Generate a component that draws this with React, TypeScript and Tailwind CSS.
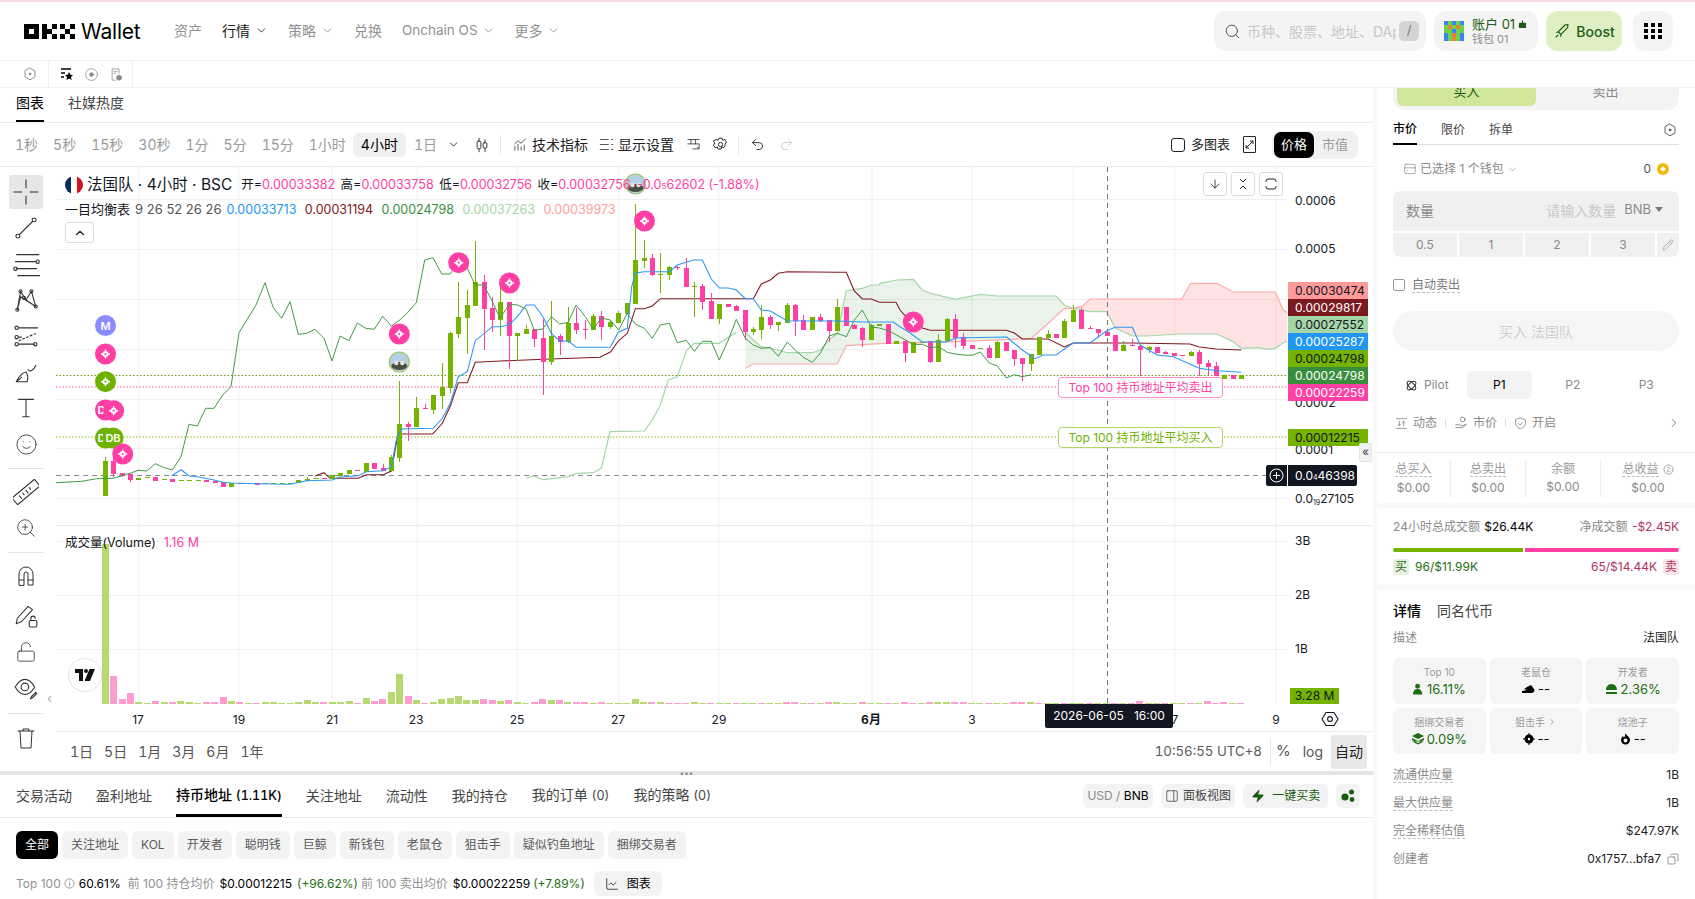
import React from "react";
import { Search, ChevronDown, Smile, ZoomIn, LockOpen, ArrowDown, ChevronRight, Copy, Pencil, Zap, Undo2, Redo2, ChevronUp, LineChart, PanelRight } from "lucide-react";

type P = [number, number];
const z3 = (a: number[]) => toPts(a, 0, 170);
const z4 = (a: number[]) => toPts(a, 400, 170);
const z5 = (a: number[]) => toPts(a, 880, 240);
function toPts(a: number[], ox: number, oy: number): P[] {
  const r: P[] = [];
  for (let i = 0; i < a.length; i += 2) r.push([ox + a[i] / 3, oy + a[i + 1] / 3]);
  return r;
}
const ps = (p: P[]) => p.map(([x, y]) => `${x.toFixed(1)},${y.toFixed(1)}`).join(" ");

const chikou = [
  ...z3([168,938,245,934,290,926,340,925,390,910,415,901,440,903,466,881,490,892,517,900,543,860,567,763,592,768,617,715,642,715,668,675,693,650,717,488,768,405,795,338,820,413,845,445,870,395,895,493,920,490,945,478,972,505,996,573,1020,498,1047,512,1072,459,1097,475,1123,478,1148,439,1174,468,1199,450,1224,427,1249,398,1274,270,1299,263,1325,312,1350,312,1375,278,1400,290,1425,345,1451,345,1477,394]),
  ...z4([300,445,328,403,353,405,379,418,403,481,428,477,454,440,479,462,505,457,528,405,556,440,580,477,604,444,631,450,656,480,682,430,706,462,733,475,757,505,781,465,808,460,832,518,859,511,883,544,907,514,934,514,958,570,985,510,1009,448,1036,505,1060,525,1084,535,1111,532,1135,559,1162,516,1186,540,1210,562,1237,577,1261,550,1288,498,1312,490,1339,500,1363,450,1387,420,1414,471,1438,474,1465,482]),
  ...z5([50,285,76,300,100,313,127,313,151,323,175,320,202,337,226,342,250,345,277,346,301,336,328,369,352,378,379,414,403,404,427,410,454,404]),
];
const blue = [
  ...z3([515,917,543,899,567,917,592,920,642,930,668,937,693,939,770,941,870,943,920,932,996,930,1020,921,1075,917,1099,905,1150,902,1174,890,1191,800,1205,777,1300,775,1327,745,1351,700,1375,620,1402,605,1426,512,1477,470]),
  ...z4([301,470,328,464,352,440,379,405,403,405,430,442,454,490,479,513,505,513,529,532,631,532,655,487,682,475,695,350,706,309,733,305,808,305,832,285,880,270,907,270,934,327,958,354,985,354,1009,360,1036,386,1060,386,1084,420,1111,423,1162,453,1312,453,1387,456]),
  ...z5([40,246,60,260,85,275,127,306,200,306,226,294,380,291,427,330,465,356,490,345,528,345,580,309,630,309,680,272,705,262,757,262,781,316,832,345,880,350,958,385,1010,392,1084,397]),
];
const base = [
  ...z3([945,918,972,908,990,925,1075,925,1099,914,1150,914,1174,903,1191,810,1205,792,1298,792,1327,760,1351,708,1375,638,1402,638,1426,577]),
  ...z4([301,573,430,568,600,562,632,545,655,513,682,490,706,416,733,416,757,408,781,386,1060,386,1084,342,1111,330,1135,310,1162,305,1312,307,1339,307,1363,363,1387,387,1414,387,1438,397]),
  ...z5([48,187,60,210,85,237,127,264,151,271,379,271,403,279,427,297,505,297,553,321,580,309,757,309,930,312,958,321,1010,327,1084,330]),
];
const spanAPre = z4([379,925,400,918,430,929,505,920,530,910,580,908,604,895,630,785,733,783,757,750,781,705,805,630,832,620,860,540,883,520,958,520,1009,487]);
const spanA1 = [...z4([1036,487,1060,510,1084,530,1135,540,1162,548,1237,548,1261,540,1288,510,1312,490,1339,362,1387,355,1414,345,1438,345]), ...z5([0,130,50,120,100,118,127,150,151,160,226,178,300,163,350,168,528,168,553,195,580,205])];
const spanA2 = z5([580,205,630,215,680,215,705,263,757,288,800,288,900,282,1010,282,1060,305,1084,325,1135,323,1162,328,1186,325,1210,308,1222,305]);
const spanB1 = [...z4([1036,595,1060,582,1312,582,1339,527]), ...z5([0,311,226,305,427,297,454,295,505,250,553,205,580,205])];
const spanB2 = z5([580,205,605,200,630,177,905,177,932,130,1010,130,1060,156,1186,156,1210,210,1222,218]);

// x, green?, top, bottom, high, low
type C = [number, number, number, number, number?, number?];
const c3: C[] = [[316,1,874,978,862,978],[340,0,874,912,858,920],[367,0,910,917,910,922],[391,0,912,930,910,935],[415,1,925,929],[441,1,921,923],[466,0,922,932],[491,1,928,930],[517,0,928,935],[542,1,931,933],[567,1,931,933],[593,1,931,933],[619,0,929,935],[644,0,933,938],[670,0,937,950],[694,1,940,950],[720,1,939,941],[745,1,940,943],[770,0,940,944],[795,1,940,942],[820,1,938,940],[845,1,938,940],[870,1,938,940],[895,1,931,939],[922,1,927,933,922,933],[947,1,925,927],[972,0,925,927],[997,1,916,928],[1021,1,910,917],[1047,1,900,911],[1072,0,901,903],[1099,1,880,906],[1123,0,880,897],[1150,0,894,902,882,903],[1174,1,862,903,855,905],[1198,1,762,863,633,875],[1225,0,762,770,755,812],[1249,1,714,770,682,770],[1276,0,714,716,702,718],[1300,1,675,720,675,732],[1327,1,651,678,578,716],[1351,1,489,653,487,670],[1375,1,441,491,336,503],[1402,1,405,443,360,551],[1426,1,336,408,213,408],[1453,0,336,416,315,539],[1477,0,415,449,382,486]];
const c4: C[] = [[301,1,396,449,350,497],[328,0,396,497,396,596],[352,1,489,497,488,572],[379,1,477,492,465,492],[403,0,477,506,477,530],[430,0,504,575,448,674],[454,1,497,576,393,585],[479,0,498,515,491,554],[505,1,459,516,411,519],[529,0,459,480,415,492],[556,0,477,479,450,507],[580,1,438,480,432,481],[604,0,438,470,424,509],[631,1,456,471,450,477],[655,1,430,459,423,460],[682,1,400,432,400,432],[706,1,270,402,102,402],[733,1,264,272,210,293],[757,0,264,316,252,318],[781,1,312,314,249,368],[808,1,291,315,288,330],[832,0,292,294,288,300],[859,0,294,350,265,350],[883,1,348,351,336,441],[907,0,348,396,342,420],[934,0,393,447,370,447],[958,1,402,447,402,462],[985,0,402,411],[1009,0,408,423,405,423],[1036,0,420,486,420,510],[1060,1,477,486,472,495],[1084,1,441,480,406,507],[1111,0,441,465,436,477],[1135,1,456,465,456,483],[1162,1,405,459,399,459],[1186,0,405,453,402,498],[1210,0,450,480,435,480],[1237,1,441,480],[1261,0,441,453,432,456],[1288,0,450,483,450,516],[1312,1,411,483,387,483],[1339,0,411,468],[1363,0,465,477,462,477],[1387,0,474,510,471,531],[1414,1,465,510,462,510],[1438,1,462,467],[1465,0,462,522],[1489,1,514,522]];
const c5: C[] = [[76,0,303,338,300,365],[100,1,306,338],[127,1,305,307],[151,0,303,365,303,369],[175,1,300,365,282,365],[202,1,237,303,234,303],[226,0,237,294,222,324],[250,0,291,318,279,327],[277,0,315,327],[301,1,324,326],[328,0,324,354,315,354],[352,1,306,354,303,354],[379,0,306,333],[403,0,330,357,330,378],[427,0,354,372,354,423],[454,1,342,372,342,393],[478,1,291,345],[505,1,282,294,270,294],[529,0,282,294],[553,1,243,294,237,294],[580,1,210,246,195,246],[604,0,210,267,204,267],[631,0,264,266,258,267],[655,0,267,279,267,294],[682,0,276,288,270,288],[706,0,285,333],[730,1,315,333,303,333],[757,0,315,317,297,318],[781,0,318,330,315,408],[808,1,321,330,318,339],[832,0,321,339],[856,0,336,342,333,342],[883,0,339,348],[907,0,345,347],[934,1,336,348,333,348],[958,0,336,372,330,408],[985,0,369,381,360,405],[1009,0,378,408,366,408],[1033,1,405,417],[1060,0,405,417],[1084,1,405,417]];

const candles = [
  ...c3.map(([x, g, t, b, h, l]) => ({ x: x / 3, g, t: 170 + t / 3, b: 170 + b / 3, h: 170 + (h ?? t) / 3, l: 170 + (l ?? b) / 3 })),
  ...c4.map(([x, g, t, b, h, l]) => ({ x: 400 + x / 3, g, t: 170 + t / 3, b: 170 + b / 3, h: 170 + (h ?? t) / 3, l: 170 + (l ?? b) / 3 })),
  ...c5.map(([x, g, t, b, h, l]) => ({ x: 880 + x / 3, g, t: 240 + t / 3, b: 240 + b / 3, h: 240 + (h ?? t) / 3, l: 240 + (l ?? b) / 3 })),
];

const volHead = [160,-28,-5,-11,2,1,-3,2,-2,3,2,1,-2,-2,-7,3,-2,1,-1,2,2,1,1,2,4,2,-2,2,2,3,-1,6,-3,-5,12,30,-8,4,-1,2,5,6,8,4,4,-5,-4,3,-4,2,1,-2,-5,4,-4,2,-2,-2,1,-2,1,1,1,5,2,-2,2,-1,-1,-1,2];
const volOver: Record<number, number> = { 81: -2, 82: -2, 86: -2, 87: 2, 90: -2, 95: -2, 98: -2, 99: 2, 100: 2, 101: -2, 102: -2, 108: -2, 109: -2, 110: 2, 122: -1, 123: -3, 131: -3, 132: -1.5, 133: -2.5 };
const vols = Array.from({ length: 136 }, (_, i) => volHead[i] ?? volOver[i] ?? (i % 3 === 0 ? -1 : 1));

const vGrid = [139, 239, 332, 417, 517, 619, 719, 872, 972, 1073, 1175, 1276];
const hGrid = [199, 249, 299, 349, 399, 448, 498, 541, 595, 649];
const xLabels: [number, string, boolean?][] = [[138, "17"], [239, "19"], [332, "21"], [416, "23"], [517, "25"], [618, "27"], [719, "29"], [871, "6月", true], [972, "3"], [1175, "7"], [1276, "9"]];

const markers: [number, number, string, string?][] = [
  [105.5, 325.5, "#8a8cff", "M"],
  [105.5, 354, "#ff3fa4"],
  [105.5, 381.7, "#6eb200"],
  [105.5, 410, "#ff3fa4", "D"],
  [113.6, 410.7, "#ff3fa4"],
  [105.5, 438, "#6eb200", "D"],
  [113, 438, "#6eb200", "DB"],
  [122.7, 454, "#ff3fa4"],
  [399.3, 334, "#ff3fa4"],
  [458.7, 262.7, "#ff3fa4"],
  [509.5, 283, "#ff3fa4"],
  [644.5, 221, "#ff3fa4"],
  [913.3, 322, "#ff3fa4"],
];

function Marker({ x, y, color, label }: { x: number; y: number; color: string; label?: string }) {
  return (
    <g>
      <circle cx={x} cy={y} r={10.5} fill={color} />
      {label ? (
        <text x={label === "D" ? x - 4 : x} y={y + 4} textAnchor="middle" fontSize="11" fontWeight="600" fill="#fff">{label}</text>
      ) : (
        <g>
          <circle cx={x} cy={y} r={3} fill="#fff" />
          <path d={`M${x} ${y - 4.5}v9M${x - 4.5} ${y}h9`} stroke="#fff" strokeWidth="1.4" />
          <circle cx={x} cy={y} r={1.1} fill={color} />
        </g>
      )}
    </g>
  );
}

function AvatarMark({ x, y }: { x: number; y: number }) {
  return (
    <g>
      <circle cx={x} cy={y} r={10} fill="#b4cfe6" stroke="#9fc25a" strokeWidth="1.2" />
      <ellipse cx={x} cy={y + 4} rx={8} ry={4} fill="#4a4f44" />
      <circle cx={x - 3} cy={y + 1} r={2.2} fill="#e9e2d8" />
      <circle cx={x + 3} cy={y + 1} r={2.2} fill="#e9e2d8" />
    </g>
  );
}

function Chart() {
  return (
    <svg viewBox="56 167 1317 565" className="absolute inset-0 w-[1317px] h-[565px]">
      {vGrid.map((x) => <line key={x} x1={x} x2={x} y1={167} y2={704} stroke="#f0f0f0" />)}
      {hGrid.map((y) => <line key={y} x1={56} x2={1287} y1={y + 0.5} y2={y + 0.5} stroke="#f0f0f0" />)}
      <line x1={56} x2={1372} y1={525.5} y2={525.5} stroke="#ececec" />

      <polygon points={ps([...spanA1, ...[...spanB1].reverse()])} fill="#388e3c" fillOpacity="0.11" />
      <polygon points={ps([...spanA2, ...[...spanB2].reverse()])} fill="#ff6f6f" fillOpacity="0.2" />

      <line x1={56} x2={1287} y1={375.5} y2={375.5} stroke="#6e9a10" strokeDasharray="1.5 2" />
      <line x1={56} x2={1287} y1={387} y2={387} stroke="#ff8fc8" strokeWidth="1.4" strokeDasharray="1.5 1.7" />
      <line x1={56} x2={1287} y1={437} y2={437} stroke="#b2d664" strokeWidth="1.4" strokeDasharray="1.5 1.7" />
      <line x1={56} x2={1266} y1={475.5} y2={475.5} stroke="#8a8a8a" strokeDasharray="5 4" />

      <polyline points={ps(spanAPre)} fill="none" stroke="#a5d6a7" strokeWidth="1.2" />
      <polyline points={ps(spanA1)} fill="none" stroke="#a5d6a7" strokeWidth="1.2" />
      <polyline points={ps(spanA2)} fill="none" stroke="#a5d6a7" strokeWidth="1.2" />
      <polyline points={ps(spanB1)} fill="none" stroke="#ffaaaa" strokeWidth="1.2" />
      <polyline points={ps(spanB2)} fill="none" stroke="#ffaaaa" strokeWidth="1.2" />
      <polyline points={ps(base)} fill="none" stroke="#801922" strokeWidth="1.1" />

      {candles.map((k, i) => {
        const col = k.g ? "#74b300" : "#ff3fa4";
        return (
          <g key={i} shapeRendering="crispEdges">
            <rect x={Math.round(k.x)} y={k.h} width={1} height={Math.max(k.l - k.h, 0.5)} fill={col} />
            <rect x={Math.round(k.x) - 2} y={k.t} width={5} height={Math.max(k.b - k.t, 1)} fill={col} />
          </g>
        );
      })}

      <polyline points={ps(chikou)} fill="none" stroke="#439a47" strokeWidth="1" />
      <polyline points={ps(blue)} fill="none" stroke="#2f98f3" strokeWidth="1.1" />

      {vols.map((v, i) => {
        const h = Math.abs(v);
        const x = 105.3 + 8.41 * i - 3.5;
        return <rect key={i} x={x} y={704 - h} width={7} height={h} fill={v > 0 ? "#b8d972" : "#ff9ccf"} shapeRendering="crispEdges" />;
      })}

      <line x1={1107.5} x2={1107.5} y1={167} y2={704} stroke="#777" strokeDasharray="5 4" />

      {markers.map((m, i) => <Marker key={i} x={m[0]} y={m[1]} color={m[2]} label={m[3]} />)}
      <AvatarMark x={399.3} y={362} />
      <AvatarMark x={635.5} y={184} />

      {xLabels.map(([x, t, b]) => (
        <text key={t} x={x} y={724} textAnchor="middle" fontSize="12" fontWeight={b ? 700 : 400} fill="#131722">{t}</text>
      ))}
      {[[200, "0.0006"], [248.5, "0.0005"], [402, "0.0002"], [449.5, "0.0001"]].map(([y, t]) => (
        <text key={t as string} x={1295} y={(y as number) + 4.5} fontSize="12" fill="#131722">{t}</text>
      ))}
      <text x={1295} y={502.5} fontSize="12" fill="#131722">0.0<tspan fontSize="7" dy="2">19</tspan><tspan dy="-2">27105</tspan></text>
      {[[540, "3B"], [594, "2B"], [648, "1B"]].map(([y, t]) => (
        <text key={t as string} x={1295} y={(y as number) + 4.5} fontSize="12" fill="#131722">{t}</text>
      ))}
      <line x1={56} x2={1372} y1={731.5} y2={731.5} stroke="#ececec" />

      <g transform="translate(1322 711)" fill="none" stroke="#131722" strokeWidth="1.1">
        <path d="M4 1.500h8l4 6.500-4 6.500H4L0 8z" />
        <circle cx="8" cy="8" r="2.400" />
      </g>
    </svg>
  );
}

const priceTags: [string, string, string][] = [
  ["0.00030474", "bg-[#ff9a9a]", "text-[#131722]"],
  ["0.00029817", "bg-[#7b1a21]", "text-white"],
  ["0.00027552", "bg-[#a5d6a7]", "text-[#131722]"],
  ["0.00025287", "bg-[#2196f3]", "text-white"],
  ["0.00024798", "bg-[#74b300]", "text-[#131722]"],
  ["0.00024798", "bg-[#388e3c]", "text-white"],
  ["0.00022259", "bg-[#ff3fa4]", "text-white"],
];

function Ic({ s = 24, sw = 1.2, children, className = "" }: { s?: number; sw?: number; children: React.ReactNode; className?: string }) {
  return (
    <svg width={s} height={s} viewBox="0 0 24 24" fill="none" stroke="currentColor" strokeWidth={sw} strokeLinecap="round" strokeLinejoin="round" className={className}>
      {children}
    </svg>
  );
}

function Hex({ s = 14, className = "" }: { s?: number; className?: string }) {
  return (
    <Ic s={s} sw={1.6} className={className}>
      <path d="M12 2l8.500 5v10L12 22l-8.500-5V7z" />
      <circle cx="12" cy="12" r="1.600" fill="currentColor" />
    </Ic>
  );
}

function Logo() {
  const k: P[] = [[0, 0], [0, 1], [0, 2], [1, 1], [2, 0], [2, 2]];
  const x: P[] = [[0, 0], [2, 0], [1, 1], [0, 2], [2, 2]];
  return (
    <svg width="51" height="15" viewBox="0 0 51 15" fill="#000">
      <path d="M0 0h15v15H0zM5 5v5h5V5z" fillRule="evenodd" />
      {k.map(([a, b], i) => <rect key={i} x={18 + a * 5} y={b * 5} width="5" height="5" />)}
      {x.map(([a, b], i) => <rect key={i} x={36 + a * 5} y={b * 5} width="5" height="5" />)}
    </svg>
  );
}

function PixelAvatar() {
  const colors = ["#3b82f6", "#6fd14a", "#e8843a", "#3b82f6", "#6fd14a"];
  const rows = [
    [0, 1, 3, 1, 0], [1, 2, 1, 2, 1], [1, 1, 3, 1, 1], [0, 4, 2, 4, 0], [3, 1, 2, 1, 3],
  ];
  return (
    <svg width="20" height="20" viewBox="0 0 20 20" shapeRendering="crispEdges">
      {rows.map((r, j) => r.map((c, i) => <rect key={`${i}-${j}`} x={i * 4} y={j * 4} width="4" height="4" fill={colors[c]} />))}
    </svg>
  );
}

const NavChev = ({ c = "text-[#8a8a8a]" }: { c?: string }) => <ChevronDown size={13} strokeWidth={1.5} className={c} />;

function Header() {
  return (
    <div className="h-[61px] shrink-0 bg-white border-t-2 border-t-[#f8dbe7] border-b border-b-[#f0f0f0] flex items-center pl-[24px] pr-[22px]">
      <div className="flex items-center gap-[6px] w-[150px]">
        <Logo />
        <span className="text-[21px] leading-none text-black tracking-[-0.2px]">Wallet</span>
      </div>
      <nav className="flex items-center gap-[20px] text-[14px] text-[#929292] -mt-[2px]">
        <span>资产</span>
        <span className="flex items-center gap-[5px] text-[#1a1a1a]">行情<NavChev c="text-[#1a1a1a]" /></span>
        <span className="flex items-center gap-[5px]">策略<NavChev /></span>
        <span>兑换</span>
        <span className="flex items-center gap-[4px] text-[13.5px]">Onchain OS<NavChev /></span>
        <span className="flex items-center gap-[4px]">更多<NavChev /></span>
      </nav>
      <div className="ml-auto flex items-center gap-[8px]">
        <div className="w-[212px] h-[40px] rounded-[12px] bg-[#f4f4f4] flex items-center pl-[10px] pr-[7px]">
          <Search size={17} strokeWidth={1.4} className="text-[#555] shrink-0" />
          <span className="ml-[6px] text-[14px] text-[#c8c8c8] whitespace-nowrap overflow-hidden flex-1">币种、股票、地址、DApp</span>
          <span className="w-[20px] h-[20px] rounded-[5px] bg-[#d4d4d4] text-[#777] text-[13px] flex items-center justify-center shrink-0 ml-[3px]">/</span>
        </div>
        <div className="w-[104px] h-[40px] rounded-[12px] bg-[#f4f4f4] flex items-center pl-[10px] gap-[8px]">
          <PixelAvatar />
          <div className="flex flex-col">
            <span className="flex items-center gap-[3px] text-[13px] leading-[16px] text-[#1c5c12]">账户 01
              <svg width="9" height="9" viewBox="0 0 10 10" fill="#1c5c12"><rect x="1" y="3" width="8" height="6" rx="1" /><rect x="4.400" y="0.500" width="1.200" height="3" /></svg>
            </span>
            <span className="text-[11px] leading-[14px] text-[#8f8f8f]">钱包 01</span>
          </div>
        </div>
        <div className="w-[76px] h-[40px] rounded-[12px] bg-[#dfefc4] flex items-center justify-center gap-[5px] text-[#1c5c12] text-[14px] font-medium">
          <Ic s={18} sw={1.5}>
            <path d="M9 15l-2-2 9-9 4-0.500-0.500 4-9 9z M7 13l-2 1 M11 17l-1 2 M4 20l2.500-2.500" />
          </Ic>
          Boost
        </div>
        <div className="ml-[3px] w-[40px] h-[40px] rounded-[12px] bg-[#f4f4f4] grid grid-cols-3 gap-[2px] place-content-center justify-items-center px-[10px]">
          {Array.from({ length: 9 }).map((_, i) => <span key={i} className="w-[4px] h-[4px] bg-black" />)}
        </div>
      </div>
    </div>
  );
}

function SubBar() {
  return (
    <div className="h-[27px] shrink-0 bg-white border-b border-[#f0f0f0] flex items-center pl-[23px] text-[#8a8a8a]">
      <Hex s={14} />
      <span className="w-px h-[26px] bg-[#efefef] ml-[11px] mr-[11px]" />
      <svg width="14" height="14" viewBox="0 0 14 14" className="text-black"><path d="M1 2h10M1 6h4M1 10h3" stroke="currentColor" strokeWidth="1.400" /><path d="M9 5l1.300 2.700 2.700.3-2 2 .6 3-2.600-1.500-2.600 1.500.6-3-2-2 2.700-.3z" fill="currentColor" /></svg>
      <Ic s={15} className="ml-[10px]"><circle cx="12" cy="12" r="9.500" /><circle cx="12" cy="12" r="3" fill="currentColor" /></Ic>
      <Ic s={15} className="ml-[10px]"><path d="M10 21H5V3h11v7" /><path d="M8 7h5M8 10h3" /><circle cx="16" cy="17" r="4" fill="currentColor" /></Ic>
      <span className="w-px h-[26px] bg-[#efefef] ml-[8px]" />
    </div>
  );
}

const frames = ["1秒", "5秒", "15秒", "30秒", "1分", "5分", "15分", "1小时"];

function ChartToolbar() {
  return (
    <div className="h-[44px] shrink-0 border-b border-[#ececec] flex items-center pl-[15px] pr-[15px] text-[14px] tabular-nums">
      <div className="flex items-center gap-[15px] text-[#9a9a9a]">
        {frames.map((f) => <span key={f}>{f}</span>)}
      </div>
      <span className="ml-[7px] h-[24px] px-[8px] rounded-[6px] bg-[#f0f0f0] flex items-center text-black">4小时</span>
      <span className="ml-[8px] text-[#9a9a9a]">1日</span>
      <ChevronDown size={13} strokeWidth={1.8} className="ml-[10px] text-[#333]" />
      <Ic s={18} className="ml-[13px] text-[#222]">
        <path d="M8 3v18M16 5v16" />
        <rect x="5.500" y="7" width="5" height="10" rx="1.500" fill="#fff" />
        <rect x="13.500" y="9" width="5" height="7" rx="1.500" fill="#fff" />
      </Ic>
      <span className="w-px h-[20px] bg-[#e6e6e6] ml-[9px]" />
      <Ic s={15} className="ml-[12px] text-[#222]"><path d="M3 21v-6M8 21v-9M13 21v-5M18 21v-8" /><path d="M3 11l5-5 5 4 7-7" /></Ic>
      <span className="ml-[4px] text-[#222]">技术指标</span>
      <Ic s={15} className="ml-[11px] text-[#222]"><path d="M2 4h13M2 12h13M2 20h13M20 4h2M20 12h2M20 20h2" /></Ic>
      <span className="ml-[4px] text-[#222]">显示设置</span>
      <Ic s={15} className="ml-[12px] text-[#222]"><path d="M3 4h18M3 11h18v7M8 4v7M15 4v7M11 19h10l-3-3" /></Ic>
      <svg width="17" height="17" viewBox="0 0 24 24" fill="none" stroke="#222" strokeWidth="1.400" className="ml-[11px]"><path d="M10 1.500h4l1 3 3-1 2.500 3.500-2 3 .1 2-2 3-3-1-1 3h-4l-1-3-3 1-2.600-3.500 2-3-2-3L5.500 3.500l3 1z" transform="translate(0 1.500)" /><circle cx="12" cy="12" r="3" /></svg>
      <span className="w-px h-[18px] bg-[#e6e6e6] ml-[9px]" />
      <Undo2 size={15} strokeWidth={1.4} className="ml-[11px] text-[#222]" />
      <Redo2 size={15} strokeWidth={1.4} className="ml-[14px] text-[#c4c4c4]" />
      <div className="ml-auto flex items-center">
        <span className="w-[14px] h-[14px] rounded-[3px] border border-[#222]" />
        <span className="ml-[6px] text-[13px] text-[#222]">多图表</span>
        <span className="ml-[13px] w-[13px] h-[17px] border border-[#222] rounded-[1px] flex items-center justify-center">
          <svg width="9" height="9" viewBox="0 0 9 9" fill="none" stroke="#222"><path d="M1 8l7-7M5 1h3v3M1 5v3h3" /></svg>
        </span>
        <div className="ml-[16px] w-[86px] h-[28px] rounded-[8px] bg-[#f1f1f1] flex items-center p-[1px] text-[13px]">
          <span className="w-[40px] h-[26px] ml-[1px] rounded-[7px] bg-black text-white flex items-center justify-center">价格</span>
          <span className="ml-[8px] text-[#9a9a9a]">市值</span>
        </div>
      </div>
    </div>
  );
}

function SideTools() {
  const Slot = ({ children, sel }: { children: React.ReactNode; sel?: boolean }) => (
    <div className={`w-[34px] h-[34px] my-px rounded-[3px] flex items-center justify-center text-[#333] ${sel ? "bg-[#e6e6e6]" : ""}`}>{children}</div>
  );
  const Sep = ({ c }: { c: string }) => <div className={`w-[36px] h-px bg-[#e4e4e4] ${c}`} />;
  return (
    <div className="w-[56px] shrink-0 pl-[9px] pt-[7px] flex flex-col items-start pr-[12px]">
      <Slot sel><Ic s={26} sw={1}><path d="M12 .5v8M12 15.500v8M.5 12h8M15.500 12h8" strokeLinecap="butt" /></Ic></Slot>
      <Slot><Ic s={26} sw={1}><circle cx="4.500" cy="19.500" r="1.800" /><circle cx="19.500" cy="4.500" r="1.800" /><path d="M6 18L18 6" /></Ic></Slot>
      <Slot><Ic s={28} sw={1}><path d="M4 4h19M3 10h17M4 16h17M5 22h19" /><circle cx="22" cy="10" r="1.400" /><circle cx="3" cy="16" r="1.400" /></Ic></Slot>
      <Slot><Ic s={26} sw={1}><path d="M4 21L7 4 12 12 17 4 21 18 7 9 4 21 M12 12L21 18" /><circle cx="4" cy="21" r="1.400" /><circle cx="7" cy="4" r="1.400" /><circle cx="17" cy="4" r="1.400" /><circle cx="21" cy="18" r="1.400" /><circle cx="10" cy="10" r="1.400" /></Ic></Slot>
      <Slot><Ic s={28} sw={1}><circle cx="4" cy="5" r="1.400" /><path d="M6 5h16" /><circle cx="4" cy="13" r="1.400" /><path d="M6 16l14-6" strokeDasharray="1.500 2" /><circle cx="4" cy="19" r="1.400" /><path d="M6 19h13" /><circle cx="20" cy="19" r="1.400" /><path d="M6 13h2" /></Ic></Slot>
      <Slot><Ic s={26} sw={1}><path d="M3 21h10c1-3 1-6-1-9-2 0-6 3-9 9z M3 21l5-4" /><path d="M14 10c1 2 5 1 7-4" /></Ic></Slot>
      <Slot><Ic s={26} sw={1}><path d="M5 4h14M12 4v16M9 20h6" /></Ic></Slot>
      <Slot><Smile size={23} strokeWidth={0.9} /></Slot>
      <Sep c="mt-[6px] mb-[5px] -ml-[1px]" />
      <Slot><Ic s={26} sw={1}><rect x="-1.500" y="8" width="27" height="8" rx="0.700" transform="rotate(-40 12 12)" /><path d="M6 15.500l2 2.500M9 13l1.200 1.500M12 10.500l2 2.500M15 8l1.200 1.500" /></Ic></Slot>
      <Slot><ZoomIn size={22} strokeWidth={0.9} /></Slot>
      <Sep c="mt-[6px] mb-[5px] -ml-[1px]" />
      <Slot><Ic s={24} sw={1}><path d="M5 21v-11a7 7 0 0114 0v11h-5v-11a2 2 0 00-4 0v11z M5 16h5M14 16h5" /></Ic></Slot>
      <div className="h-[3px]" />
      <Slot><Ic s={26} sw={1}><path d="M3 20l1-5L14 4l4 3-10 11z" /><rect x="15" y="17" width="7" height="6" rx="1" /><path d="M16.500 17v-2a2 2 0 014 0" /></Ic></Slot>
      <div className="h-[1px]" />
      <Slot><LockOpen size={22} strokeWidth={0.9} /></Slot>
      <Slot><Ic s={26} sw={1}><path d="M2 11c3-5 6-7 9-7s6 2 9 7c-3 5-6 7-9 7s-6-2-9-7z" /><circle cx="11" cy="11" r="3.500" /><path d="M16 22l1-2 4-4 1 1-4 4z" /></Ic></Slot>
      <Sep c="mt-[7px] mb-[6px] -ml-[1px]" />
      <Slot><Ic s={24} sw={1}><path d="M4 5h16M9 5V3h6v2M6 5l1 17h10l1-17" /></Ic></Slot>
    </div>
  );
}

function ChartCanvas() {
  return (
    <div className="relative h-[565px] w-[1317px] shrink-0">
      <Chart />
      {/* legend */}
      <div className="absolute left-[9px] top-[8px] h-[20px] flex items-center text-[12.5px] text-[#131722] whitespace-nowrap">
        <svg width="18" height="18" viewBox="0 0 18 18"><clipPath id="fl"><circle cx="9" cy="9" r="9" /></clipPath><g clipPath="url(#fl)"><rect width="6" height="18" fill="#0a2a5e" /><rect x="6" width="6" height="18" fill="#fff" /><rect x="12" width="6" height="18" fill="#d3141f" /></g></svg>
        <span className="ml-[4px] text-[15.5px]">法国队 · 4小时 · BSC</span>
        <span className="ml-[9px]">开=<span className="text-[#ff3fa4]">0.00033382</span></span>
        <span className="ml-[5.500px]">高=<span className="text-[#ff3fa4]">0.00033758</span></span>
        <span className="ml-[5.500px]">低=<span className="text-[#ff3fa4]">0.00032756</span></span>
        <span className="ml-[5.500px]">收=<span className="text-[#ff3fa4]">0.00032756</span></span>
        <span className="ml-[6.500px] text-[#ff3fa4]">-0.0<span className="text-[8px]">5</span>62602 (-1.88%)</span>
      </div>
      <div className="absolute left-[9px] top-[33px] h-[20px] flex items-center text-[12.5px] whitespace-nowrap">
        <span className="text-[#131722] text-[13px]">一目均衡表</span>
        <span className="ml-[5px] text-[#555] text-[13px]">9 26 52 26 26</span>
        <span className="ml-[5px] text-[#2196f3]">0.00033713</span>
        <span className="ml-[8.500px] text-[#801922]">0.00031194</span>
        <span className="ml-[8.500px] text-[#388e3c]">0.00024798</span>
        <span className="ml-[8.500px] text-[#a5d6a7]">0.00037263</span>
        <span className="ml-[8.500px] text-[#ffa0a0]">0.00039973</span>
      </div>
      <div className="absolute left-[9px] top-[55px] w-[29px] h-[21px] rounded-[3px] border border-[#dcdcdc] bg-white flex items-center justify-center">
        <ChevronUp size={14} strokeWidth={2} className="text-[#222]" />
      </div>
      {/* volume legend */}
      <div className="absolute left-[9px] top-[368px] h-[16px] flex items-center text-[12.5px] whitespace-nowrap">
        <span className="text-[#131722]">成交量(Volume)</span>
        <span className="ml-[8px] text-[#ff3fa4]">1.16 M</span>
      </div>
      {/* top right buttons */}
      <div className="absolute left-[1147px] top-[5px] flex gap-[4px] text-[#222]">
        <span className="w-[24px] h-[24px] rounded-[3px] border border-[#dcdcdc] bg-white flex items-center justify-center"><ArrowDown size={14} strokeWidth={1.4} /></span>
        <span className="w-[24px] h-[24px] rounded-[3px] border border-[#dcdcdc] bg-white flex items-center justify-center"><svg width="12" height="14" viewBox="0 0 12 14" fill="none" stroke="#222"><path d="M3 2l3 3 3-3M3 12l3-3 3 3" /></svg></span>
        <span className="w-[24px] h-[24px] rounded-[3px] border border-[#dcdcdc] bg-white flex items-center justify-center"><svg width="14" height="14" viewBox="0 0 14 14" fill="none" stroke="#222"><path d="M2 5V4a2 2 0 012-2h6a2 2 0 012 2v1M2 9v1a2 2 0 002 2h6a2 2 0 002-2V9" /></svg></span>
      </div>
      {/* price tags */}
      <div className="absolute left-[1232px] top-[115px] w-[80px] flex flex-col">
        {priceTags.map(([v, b, t], i) => (
          <span key={i} className={`h-[17px] pl-[7px] text-[12px] leading-[17px] ${b} ${t}`}>{v}</span>
        ))}
      </div>
      <span className="absolute left-[1232px] top-[262px] w-[80px] h-[17px] pl-[7px] text-[12px] leading-[17px] bg-[#74b300] text-[#131722]">0.00012215</span>
      <div className="absolute left-[1210px] top-[298px] h-[21px] flex items-center">
        <span className="w-[21px] h-[21px] bg-[#131722] rounded-l-[2px] flex items-center justify-center">
          <svg width="15" height="15" viewBox="0 0 15 15" fill="none" stroke="#fff"><circle cx="7.500" cy="7.500" r="6.500" /><path d="M7.500 4v7M4 7.500h7" /></svg>
        </span>
        <span className="ml-px w-[69px] h-[21px] bg-[#131722] text-white rounded-r-[2px] pl-[7px] text-[12px] leading-[21px]">0.0<span className="text-[7px]">4</span>46398</span>
      </div>
      <span className="absolute left-[1234px] top-[521px] w-[49px] h-[16px] bg-[#74b300] text-[#131722] text-[12px] leading-[16px] text-center">3.28 M</span>
      {/* order tags */}
      <span className="absolute left-[1002px] top-[210px] w-[165px] h-[21px] rounded-[4px] border border-[#ff8fc8] bg-white text-[#ff3fa4] text-[12px] leading-[19px] text-center">Top 100 持币地址平均卖出</span>
      <span className="absolute left-[1002px] top-[260px] w-[165px] h-[21px] rounded-[4px] border border-[#b2d664] bg-white text-[#6eb200] text-[12px] leading-[19px] text-center">Top 100 持币地址平均买入</span>
      {/* collapse */}
      <span className="absolute left-[1303px] top-[276px] w-[13px] h-[19px] rounded-l-[2px] bg-[#f1f1f1] border border-[#e6e6e6] text-[#444] text-[12px] leading-[16px] text-center">«</span>
      {/* TV logo */}
      <div className="absolute left-[12px] top-[491px] w-[34px] h-[34px] rounded-full border border-[#e4e4e4] bg-white flex items-center justify-center">
        <svg width="20" height="12" viewBox="0 0 20 12" fill="#111"><path d="M0 0h8v12H4V4H0z" /><circle cx="11" cy="2" r="2" /><path d="M14.500 0H20l-5 12H9.500z" /></svg>
      </div>
      <span className="absolute left-[-9px] top-[523px] text-[13px] leading-[16px] text-[#aaa]">‹</span>
      {/* date tip */}
      <span className="absolute left-[989px] top-[537px] w-[128px] h-[24px] rounded-b-[2px] bg-[#131722] text-white text-[12px] leading-[24px] text-center whitespace-pre">2026-06-05   16:00</span>
    </div>
  );
}

function RangeRow() {
  return (
    <div className="h-[39px] flex items-center pl-[14px] pr-[6px] text-[14px] text-[#555] tabular-nums">
      <div className="flex items-center gap-[11px]">
        {["1日", "5日", "1月", "3月", "6月", "1年"].map((t) => <span key={t}>{t}</span>)}
      </div>
      <span className="ml-auto text-[13.25px] text-[#5a5a5a]">10:56:55 UTC+8</span>
      <span className="w-px h-[26px] bg-[#e6e6e6] ml-[8px]" />
      <span className="ml-[5px] text-[#555] text-[15px]">%</span>
      <span className="ml-[12px] text-[#555]">log</span>
      <span className="ml-[8px] h-[34px] w-[36px] rounded-[4px] bg-[#e8e8e8] flex items-center justify-center text-[#222]">自动</span>
    </div>
  );
}

const bottomTabs: [string, string][] = [["交易活动", ""], ["盈利地址", ""], ["持币地址", "(1.11K)"], ["关注地址", ""], ["流动性", ""], ["我的持仓", ""], ["我的订单", "(0)"], ["我的策略", "(0)"]];
const chips = ["全部", "关注地址", "KOL", "开发者", "聪明钱", "巨鲸", "新钱包", "老鼠仓", "狙击手", "疑似钓鱼地址", "捆绑交易者"];

function BottomPanel() {
  return (
    <div className="flex-1 min-h-0 overflow-hidden">
      <div className="h-[43px] border-b border-[#ececec] flex items-stretch pl-[16px] pr-[13px]">
        <div className="flex gap-[24px] text-[14px] text-[#444] tabular-nums">
          {bottomTabs.map(([t, n], i) => (
            <span key={t} className={`flex items-center border-b-[3px] pt-[1px] ${i === 2 ? "border-black text-black font-medium" : "border-transparent"}`}>
              <span>{t}{n ? " " : ""}{n && <span className="text-[12.5px]">{n}</span>}</span>
            </span>
          ))}
        </div>
        <div className="ml-auto flex items-center gap-[8px] text-[12px]">
          <span className="h-[24px] w-[70px] rounded-[6px] bg-[#f3f3f3] flex items-center justify-center text-[#8a8a8a]">USD /&nbsp;<span className="text-black">BNB</span></span>
          <span className="h-[24px] w-[74px] rounded-[6px] bg-[#f3f3f3] flex items-center justify-center gap-[4px] text-[#444]"><PanelRight size={14} strokeWidth={1.3} />面板视图</span>
          <span className="h-[24px] w-[85px] rounded-[6px] bg-[#f3f3f3] flex items-center justify-center gap-[4px] text-[#1c5c12]"><Zap size={14} fill="#1c5c12" strokeWidth={1} />&nbsp;一键买卖</span>
          <span className="h-[24px] w-[24px] rounded-[6px] bg-[#f3f3f3] flex items-center justify-center">
            <svg width="14" height="14" viewBox="0 0 14 14" fill="#1c5c12"><circle cx="4" cy="8" r="3.600" /><circle cx="10.500" cy="3" r="2.500" /><circle cx="11" cy="10.500" r="2.400" /></svg>
          </span>
        </div>
      </div>
      <div className="mt-[13px] pl-[16px] flex gap-[4px] text-[12px] text-[#5c5c5c]">
        {chips.map((c, i) => (
          <span key={c} className={`h-[28px] px-[9px] rounded-[6px] flex items-center ${i === 0 ? "bg-black text-white" : "bg-[#f3f3f3]"}`}>{c}</span>
        ))}
      </div>
      <div className="mt-[12px] pl-[16px] h-[25px] flex items-center text-[12px] text-[#929292] whitespace-nowrap">
        <span>Top 100</span>
        <svg width="11" height="11" viewBox="0 0 12 12" fill="none" stroke="#929292" className="ml-[3px]"><circle cx="6" cy="6" r="5" /><path d="M6 5v4M6 3v1" /></svg>
        <span className="ml-[4px] text-black">60.61%</span>
        <span className="ml-[7px]">前 100 持仓均价</span>
        <span className="ml-[5px] text-black">$0.00012215</span>
        <span className="ml-[5px] text-[#1f6d12]">(+96.62%)</span>
        <span className="ml-[3px]">前 100 卖出均价</span>
        <span className="ml-[5px] text-black">$0.00022259</span>
        <span className="ml-[3px] text-[#1f6d12]">(+7.89%)</span>
        <span className="ml-[9px] h-[25px] w-[68px] rounded-[6px] bg-[#f3f3f3] text-black flex items-center justify-center gap-[8px]"><LineChart size={14} strokeWidth={1.2} />图表</span>
      </div>
    </div>
  );
}

function Dashed({ children, className = "" }: { children: React.ReactNode; className?: string }) {
  return <span className={`border-b border-dashed border-[#bdbdbd] leading-[15px] ${className}`}>{children}</span>;
}

function TradePanel() {
  return (
    <div className="bg-white h-[415px] shrink-0 px-[16px] overflow-hidden flex flex-col">
      <div className="h-[22px] rounded-b-[12px] bg-[#f3f3f3] flex pl-[4px] pr-[4px] pb-[4px] text-[13px] shrink-0">
        <span className="w-[139px] rounded-b-[6px] bg-[#cfe69b] flex items-end justify-center text-[#1c5c12] overflow-hidden leading-[14px] pb-[8px]">买入</span>
        <span className="flex-1 flex items-end justify-center text-[#8a8a8a] leading-[14px] pb-[8px]">卖出</span>
      </div>
      <div className="h-[35px] border-b border-[#e0e0e0] flex items-stretch text-[12px] text-[#444] shrink-0">
        <span className="flex items-center border-b-[2px] border-black text-black font-medium -mb-px pt-[5px]">市价</span>
        <span className="flex items-center ml-[24px] pt-[5px]">限价</span>
        <span className="flex items-center ml-[24px] pt-[5px]">拆单</span>
        <span className="ml-auto flex items-center pr-[2px] pt-[5px]"><Hex s={14} className="text-[#555]" /></span>
      </div>
      <div className="h-[46px] flex items-center text-[12px] text-[#8a8a8a] px-[10px] shrink-0 pt-[2px]">
        <Ic s={14}><rect x="3" y="4" width="18" height="16" rx="2" /><path d="M3 10h18M7 15h1" /></Ic>
        <span className="ml-[3px]">已选择 1 个钱包</span>
        <ChevronDown size={11} strokeWidth={1.3} className="ml-[3px]" />
        <span className="ml-auto text-[12px] text-[#555]">0</span>
        <span className="ml-[6px] w-[12px] h-[12px] rounded-full bg-[#f0b90b] flex items-center justify-center"><span className="w-[4px] h-[4px] rotate-45 bg-white" /></span>
      </div>
      <div className="h-[40px] rounded-t-[8px] bg-[#f0f0f0] flex items-center pl-[13px] pr-[16px] shrink-0 pb-[2px]">
        <span className="text-[14px] text-[#8a8a8a]">数量</span>
        <span className="ml-auto text-[14px] text-[#c8c8c8]">请输入数量</span>
        <span className="ml-[8px] text-[13px] text-[#8a8a8a]">BNB</span>
        <span className="ml-[4px] w-0 h-0 border-x-[4px] border-x-transparent border-t-[5px] border-t-[#777] mb-[2px]" />
      </div>
      <div className="mt-[2px] h-[24px] flex gap-[2px] text-[12px] text-[#8a8a8a] shrink-0">
        {["0.5", "1", "2", "3"].map((t) => <span key={t} className="w-[64px] bg-[#f0f0f0] flex items-center justify-center first:rounded-bl-[8px]">{t}</span>)}
        <span className="flex-1 bg-[#f0f0f0] rounded-br-[8px] flex items-center justify-center"><Pencil size={12} strokeWidth={1.2} /></span>
      </div>
      <div className="mt-[20px] h-[16px] flex items-center text-[12px] text-[#777] shrink-0">
        <span className="w-[12px] h-[12px] rounded-[2px] border border-[#999]" />
        <Dashed className="ml-[7px]">自动卖出</Dashed>
      </div>
      <div className="mt-[18px] h-[40px] rounded-full bg-[#f5f5f5] text-[14px] text-[#cfcfcf] flex items-center justify-center shrink-0">买入 法国队</div>
      <div className="mt-[20px] h-[28px] flex items-center text-[12px] text-[#8a8a8a] shrink-0">
        <span className="w-[74px] pl-[12px] flex items-center gap-[6px]">
          <Ic s={13} sw={1.8} className="text-[#333]"><ellipse cx="12" cy="12" rx="10" ry="5" transform="rotate(45 12 12)" /><ellipse cx="12" cy="12" rx="10" ry="5" transform="rotate(-45 12 12)" /></Ic>
          Pilot
        </span>
        <span className="w-[66px] h-[28px] rounded-[6px] bg-[#f3f3f3] text-black flex items-center justify-center">P1</span>
        <span className="w-[82px] flex items-center justify-center">P2</span>
        <span className="w-[66px] flex items-center justify-center">P3</span>
      </div>
      <div className="mt-[14px] h-[20px] flex items-center text-[12px] text-[#8a8a8a] shrink-0 pl-[2px]">
        <Ic s={13} className="text-[#666]"><path d="M3 3h18M3 21h18M8 8v8M16 8v8M6 14l2 2 2-2M14 10l2-2 2 2" /></Ic>
        <span className="ml-[5px]">动态</span>
        <span className="w-px h-[8px] bg-[#ddd] mx-[8px]" />
        <Ic s={14} className="text-[#666]"><circle cx="15" cy="6" r="4" /><path d="M3 15h6l5 2 7-3-6 6H3" /></Ic>
        <span className="ml-[5px]">市价</span>
        <span className="w-px h-[8px] bg-[#ddd] mx-[8px]" />
        <Ic s={13} className="text-[#666]"><path d="M12 2l9 3v7c0 5-4 8-9 10-5-2-9-5-9-10V5z" /><path d="M8 12l3 3 5-5" /></Ic>
        <span className="ml-[5px]">开启</span>
        <ChevronRight size={14} strokeWidth={1.3} className="ml-auto text-[#555] -mr-[2px]" />
      </div>
      <div className="-mx-[16px] mt-[19px] border-t border-[#ececec] flex-1 flex text-[12px] text-[#9a9a9a] pt-[8px]">
        {["总买入", "总卖出", "余额"].map((t, i) => (
          <div key={i} className={`flex flex-col items-center ${i === 0 ? "w-[74px]" : "w-[75px]"} border-r border-[#ececec] h-[36px]`}>
            {i < 2 ? <Dashed>{t}</Dashed> : <span className="leading-[15px]">{t}</span>}
            <span className="mt-[2px] text-[#8a8a8a]">$0.00</span>
          </div>
        ))}
        <div className="flex-1 flex flex-col items-center h-[36px]">
          <span className="flex items-center gap-[4px]"><Dashed>总收益</Dashed><svg width="11" height="11" viewBox="0 0 12 12" fill="none" stroke="#999"><circle cx="6" cy="6" r="5" /><path d="M4.500 4.500c0-1 3-1 3 0s-3 1.500-3 3 3 1 3 0" /></svg></span>
          <span className="mt-[2px] text-[#8a8a8a]">$0.00</span>
        </div>
      </div>
    </div>
  );
}

function VolumePanel() {
  return (
    <div className="bg-white h-[77px] shrink-0 px-[16px] pt-[11px] text-[12px]">
      <div className="flex justify-between h-[16px] items-center">
        <span><span className="text-[#8a8a8a]">24小时总成交额</span> <span className="text-black ml-[1px]">$26.44K</span></span>
        <span><span className="text-[#8a8a8a]">净成交额</span> <span className="text-[#b0345f] ml-[1px]">-$2.45K</span></span>
      </div>
      <div className="mt-[13px] flex gap-[2px] h-[4px]">
        <span className="w-[130px] bg-[#74b300] rounded-l-[2px]" />
        <span className="flex-1 bg-[#ff3fa4] rounded-r-[2px]" />
      </div>
      <div className="mt-[6px] flex items-center">
        <span className="w-[16px] h-[16px] bg-[#e8f0e0] text-[#1f6d12] rounded-[2px] text-center leading-[16px]">买</span>
        <span className="ml-[6px] text-[#1f6d12]">96/$11.99K</span>
        <span className="ml-auto text-[#b0345f]">65/$14.44K</span>
        <span className="ml-[6px] w-[16px] h-[16px] bg-[#f8e6ec] text-[#b0345f] rounded-[2px] text-center leading-[16px]">卖</span>
      </div>
    </div>
  );
}

function StatCard({ title, children }: { title: React.ReactNode; children: React.ReactNode }) {
  return (
    <div className="h-[46px] rounded-[6px] bg-[#f5f5f5] flex flex-col items-center justify-center">
      <span className="text-[10px] leading-[14px] text-[#9a9a9a] flex items-center">{title}</span>
      <span className="mt-[2px] flex items-center gap-[3px] text-[13px] leading-[16px] text-[#1f6d12]">{children}</span>
    </div>
  );
}

function DetailPanel() {
  return (
    <div className="bg-white flex-1 px-[16px] pt-[12px] text-[12px]">
      <div className="flex gap-[16px] text-[14px] h-[16px] items-center">
        <span className="font-medium text-black">详情</span>
        <span className="text-[#444]">同名代币</span>
      </div>
      <div className="mt-[12px] flex justify-between h-[16px] items-center">
        <span className="text-[#8a8a8a]">描述</span>
        <span className="text-[#222]">法国队</span>
      </div>
      <div className="mt-[12px] grid grid-cols-3 gap-[4px]">
        <StatCard title="Top 10">
          <svg width="11" height="12" viewBox="0 0 12 12" fill="#1f6d12"><circle cx="5" cy="3" r="2.600" /><path d="M0 12c0-4 2-6 5-6s5 2 5 6z" /></svg>16.11%
        </StatCard>
        <StatCard title="老鼠仓">
          <span className="text-black flex items-center gap-[3px]"><svg width="13" height="11" viewBox="0 0 13 11" fill="#000"><path d="M0 9h9c3 0 4-2 3-4L9 1 7 2 5 3 2 5l3 1-5 1z" /></svg>--</span>
        </StatCard>
        <StatCard title="开发者">
          <svg width="13" height="12" viewBox="0 0 13 12" fill="#1f6d12"><path d="M1 7c0-3 2-6 5.500-6S12 4 12 7zM1 9h11v2H1z" /></svg>2.36%
        </StatCard>
        <StatCard title="捆绑交易者">
          <svg width="12" height="12" viewBox="0 0 12 12" fill="#1f6d12"><path d="M6 0l6 3-6 3-6-3zM0 5l6 3 6-3v2L6 10 0 7zM0 8.500l6 3 6-3" /></svg>0.09%
        </StatCard>
        <StatCard title={<>狙击手<ChevronRight size={10} className="ml-[2px]" /></>}>
          <span className="text-black flex items-center gap-[3px]"><svg width="12" height="12" viewBox="0 0 12 12"><circle cx="6" cy="6" r="4.500" fill="#000" /><circle cx="6" cy="6" r="1.200" fill="#fff" /><path d="M6 0v3M6 9v3M0 6h3M9 6h3" stroke="#000" /></svg>--</span>
        </StatCard>
        <StatCard title="烧池子">
          <span className="text-black flex items-center gap-[3px]"><svg width="11" height="12" viewBox="0 0 11 12" fill="#000"><path fillRule="evenodd" d="M5.500 0c0 2 4.500 3.500 4.500 7a4.500 4.500 0 01-9 0c0-2 1-3 2-4 0 1 1 1.500 1.500 1 .8-.8.5-3 1-4zM5.500 5.500a2 2 0 100 4 2 2 0 000-4z" /></svg>--</span>
        </StatCard>
      </div>
      <div className="mt-[13px] flex flex-col gap-[12px]">
        {[["流通供应量", "1B"], ["最大供应量", "1B"], ["完全稀释估值", "$247.97K"]].map(([a, b]) => (
          <div key={a} className="h-[16px] flex justify-between items-center text-[#8a8a8a]">
            <Dashed>{a}</Dashed>
            <span className="text-[#222]">{b}</span>
          </div>
        ))}
        <div className="h-[16px] flex justify-between items-center text-[#8a8a8a]">
          <span>创建者</span>
          <span className="flex items-center gap-[6px] text-[#222]">0x1757...bfa7<Copy size={12} strokeWidth={1.2} className="text-[#555] -scale-x-100" /></span>
        </div>
      </div>
    </div>
  );
}

export default function App() {
  return (
    <div className="w-[1695px] h-[899px] overflow-hidden flex flex-col bg-[#f9f9f9] text-black font-['Inter','Noto_Sans_CJK_SC',sans-serif]">
      <Header />
      <SubBar />
      <div className="flex flex-1 min-h-0">
        <div className="w-[1373px] shrink-0 bg-white flex flex-col">
          <div className="h-[35px] shrink-0 border-b border-[#ececec] flex items-stretch gap-[24px] pl-[16px] text-[14px] text-[#444]">
            <span className="flex items-center border-b-[2px] border-black text-black pb-[3px]">图表</span>
            <span className="flex items-center pb-[5px]">社媒热度</span>
          </div>
          <ChartToolbar />
          <div className="flex shrink-0 h-[604px]">
            <SideTools />
            <div className="flex flex-col flex-1 min-w-0">
              <ChartCanvas />
              <RangeRow />
            </div>
          </div>
          <div className="h-[4px] shrink-0 bg-[#e5e5e5] flex justify-center items-center">
            <span className="text-[8px] leading-none text-[#888]">•••</span>
          </div>
          <BottomPanel />
        </div>
        <div className="w-[318px] ml-[4px] flex flex-col gap-[5px] overflow-hidden">
          <TradePanel />
          <VolumePanel />
          <DetailPanel />
        </div>
      </div>
    </div>
  );
}
